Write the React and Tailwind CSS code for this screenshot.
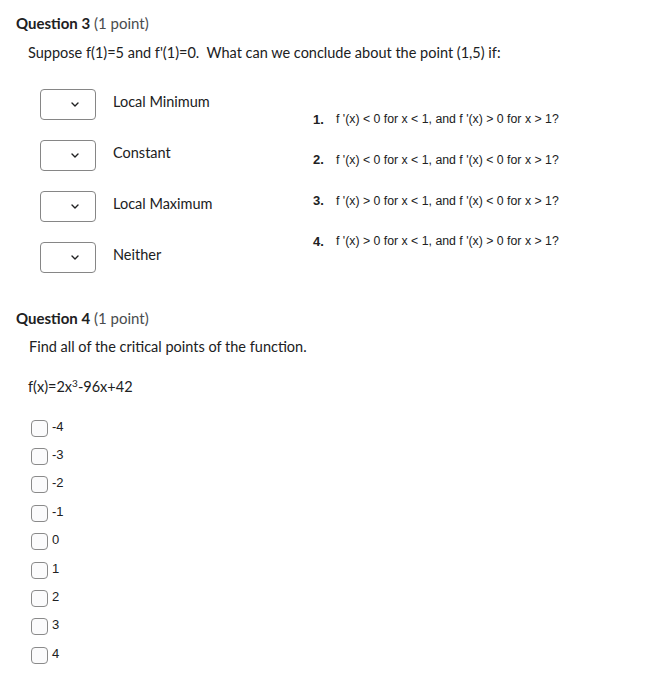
import React from "react";

const matches = ["Local Minimum", "Constant", "Local Maximum", "Neither"];

const conditions = [
  "f '(x) < 0 for x < 1, and f '(x) > 0 for x > 1?",
  "f '(x) < 0 for x < 1, and f '(x) < 0 for x > 1?",
  "f '(x) > 0 for x < 1, and f '(x) < 0 for x > 1?",
  "f '(x) > 0 for x < 1, and f '(x) > 0 for x > 1?",
];

const choices = ["-4", "-3", "-2", "-1", "0", "1", "2", "3", "4"];

const Chevron = () => (
  <svg width="8" height="5" viewBox="0 0 8 5" fill="none">
    <path d="M1 1l3 3 3-3" stroke="#202122" strokeWidth="1.4" strokeLinecap="round" strokeLinejoin="round" />
  </svg>
);

const App = () => {
  return (
    <div className="w-[658px] h-[677px] bg-white text-[#202122] font-['Lato',sans-serif] overflow-hidden">
      {/* Question 3 */}
      <div className="pt-[13px] pl-[16px]">
        <h2 className="text-[15px] leading-[20px]">
          <span className="font-bold">Question 3</span>{" "}
          <span className="text-[#494c4e]">(1 point)</span>
        </h2>
        <p className="mt-[10px] pl-[12px] text-[14.5px] leading-[20px]">
          Suppose f(1)=5 and f'(1)=0.&nbsp; What can we conclude about the point (1,5) if:
        </p>
      </div>

      <div className="flex pl-[40px] mt-[26px]">
        <div className="w-[273px] flex flex-col gap-[20px]">
          {matches.map((m) => (
            <div key={m} className="flex items-start">
              <div className="w-[56px] h-[31px] border border-[#868686] rounded-[4px] flex items-center justify-end pr-[16px]">
                <Chevron />
              </div>
              <span className="ml-[17px] pt-[3px] text-[14.5px] leading-[20px]">{m}</span>
            </div>
          ))}
        </div>
        <ol className="pt-[22px] flex flex-col gap-[23.7px] font-['Liberation_Sans',Arial,sans-serif]">
          {conditions.map((c, i) => (
            <li key={i} className="flex items-center h-[17px]">
              <span className="w-[23px] font-bold text-[13px]">{i + 1}.</span>
              <span className="text-[12.3px]">{c}</span>
            </li>
          ))}
        </ol>
      </div>

      {/* Question 4 */}
      <div className="mt-[35px] pl-[16px]">
        <h2 className="text-[15px] leading-[20px]">
          <span className="font-bold">Question 4</span>{" "}
          <span className="text-[#494c4e]">(1 point)</span>
        </h2>
        <p className="mt-[9px] pl-[13px] text-[14.5px] leading-[20px]">
          Find all of the critical points of the function.
        </p>
        <p className="mt-[20px] pl-[12px] text-[14.5px] leading-[20px]">
          f(x)=2x<sup className="text-[10px]">3</sup>-96x+42
        </p>
      </div>

      <div className="mt-[17px] pl-[31px] flex flex-col font-['Liberation_Sans',Arial,sans-serif]">
        {choices.map((c) => (
          <label key={c} className="flex items-center h-[28.4px]">
            <span className="w-[17px] h-[17px] border border-[#8a8a8a] rounded-[4px] bg-[#fbfbfc]" />
            <span className="ml-[4px] text-[13px] leading-[17px] -mt-[4px]">{c}</span>
          </label>
        ))}
      </div>
    </div>
  );
};

export default App;
